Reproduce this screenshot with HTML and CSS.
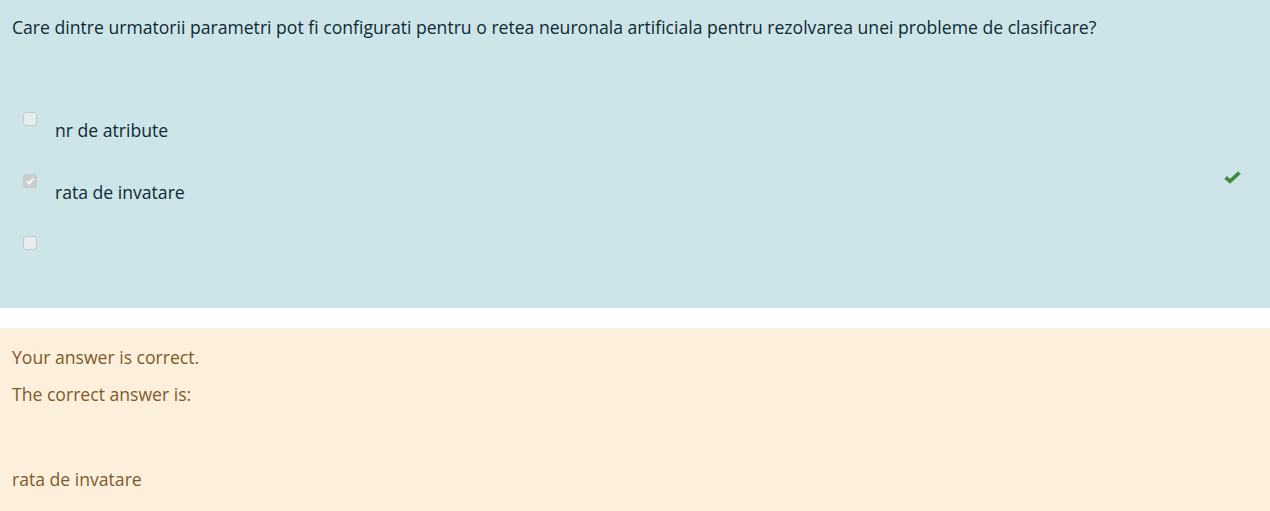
FILE: index.html
```html
<!DOCTYPE html>
<html lang="ro">
<head>
<meta charset="utf-8">
<title>Quiz</title>
<link rel="stylesheet" href="styles.css">
</head>
<body>
<div class="formulation">
  <div class="qtext">Care dintre urmatorii parametri pot fi configurati pentru o retea neuronala artificiala pentru rezolvarea unei probleme de clasificare?</div>
  <div class="answers">
    <div class="opt">
      <span class="cb"></span>
      <span class="lbl">nr de atribute</span>
    </div>
    <div class="opt">
      <span class="cb checked"><svg viewBox="0 0 14 14" width="14" height="14"><path d="M3.4 7.4 L5.9 9.8 L10.8 4.4" fill="none" stroke="#ffffff" stroke-width="2"/></svg></span>
      <span class="lbl">rata de invatare</span>
      <svg class="tick" viewBox="0 0 17 13" width="17" height="13"><path d="M1.6 6.4 L6 10.4 L15.4 1.6" fill="none" stroke="#3d8a3e" stroke-width="3.6" stroke-linejoin="miter"/></svg>
    </div>
    <div class="opt">
      <span class="cb"></span>
      <span class="lbl"></span>
    </div>
  </div>
</div>
<div class="outcome">
  <div class="fb">Your answer is correct.</div>
  <div class="fb">The correct answer is:</div>
  <div class="right">rata de invatare</div>
</div>
</body>
</html>
```
FILE: styles.css
```css
html, body {
  margin: 0;
  padding: 0;
  background: #ffffff;
  font-family: "Open Sans", "Noto Sans", sans-serif;
  font-size: 17.6px;
}
.formulation {
  background: #cde5e9;
  color: #0f2a33;
  height: 308px;
  box-sizing: border-box;
  padding: 14px 12px 0 12px;
}
.qtext {
  line-height: 26px;
}
.answers {
  margin-top: 72px;
  display: flex;
  flex-direction: column;
}
.opt {
  display: flex;
  align-items: flex-start;
  height: 62px;
  position: relative;
  padding-left: 11px;
}
.cb {
  width: 14px;
  height: 14px;
  border: 1px solid #c3cacc;
  border-radius: 3px;
  background: #e6edef;
  box-sizing: border-box;
  flex: none;
  display: flex;
  align-items: center;
  justify-content: center;
}
.cb.checked {
  background: #c8cfd1;
  border-color: #c2c9cb;
}
.cb svg { display: block; }
.lbl {
  margin-left: 18px;
  margin-top: 5px;
  line-height: 26px;
}
.tick {
  position: absolute;
  right: 17px;
  top: -3px;
}
.outcome {
  margin-top: 20px;
  background: #fcefdc;
  color: #7d5a29;
  padding: 16px 12px 20px 12px;
  min-height: 200px;
  box-sizing: border-box;
}
.fb {
  line-height: 26px;
  margin-bottom: 11px;
}
.right {
  margin-top: 59px;
  line-height: 26px;
}
```
